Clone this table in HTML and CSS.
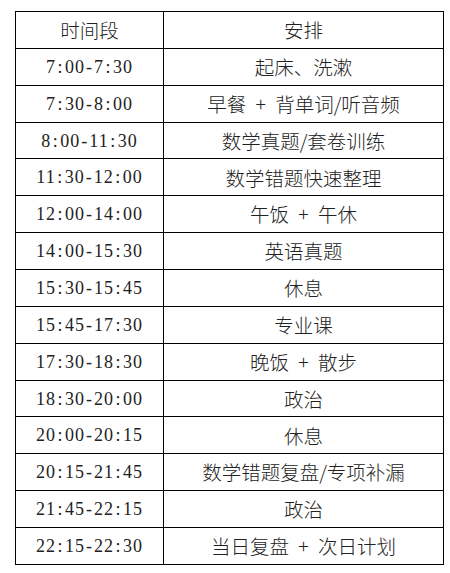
FILE: index.html
```html
<!DOCTYPE html>
<html lang="zh">
<head>
<meta charset="utf-8">
<link rel="stylesheet" href="styles.css">
</head>
<body>
<table class="schedule">
  <thead>
    <tr><th class="time-head">时间段</th><th class="plan">安排</th></tr>
  </thead>
  <tbody>
    <tr><td class="time">7<span class="sep">:</span>00<span class="sep">-</span>7<span class="sep">:</span>30</td><td class="plan">起床、洗漱</td></tr>
    <tr><td class="time">7<span class="sep">:</span>30<span class="sep">-</span>8<span class="sep">:</span>00</td><td class="plan">早餐 + 背单词/听音频</td></tr>
    <tr><td class="time">8<span class="sep">:</span>00<span class="sep">-</span>11<span class="sep">:</span>30</td><td class="plan">数学真题/套卷训练</td></tr>
    <tr><td class="time">11<span class="sep">:</span>30<span class="sep">-</span>12<span class="sep">:</span>00</td><td class="plan">数学错题快速整理</td></tr>
    <tr><td class="time">12<span class="sep">:</span>00<span class="sep">-</span>14<span class="sep">:</span>00</td><td class="plan">午饭 + 午休</td></tr>
    <tr><td class="time">14<span class="sep">:</span>00<span class="sep">-</span>15<span class="sep">:</span>30</td><td class="plan">英语真题</td></tr>
    <tr><td class="time">15<span class="sep">:</span>30<span class="sep">-</span>15<span class="sep">:</span>45</td><td class="plan">休息</td></tr>
    <tr><td class="time">15<span class="sep">:</span>45<span class="sep">-</span>17<span class="sep">:</span>30</td><td class="plan">专业课</td></tr>
    <tr><td class="time">17<span class="sep">:</span>30<span class="sep">-</span>18<span class="sep">:</span>30</td><td class="plan">晚饭 + 散步</td></tr>
    <tr><td class="time">18<span class="sep">:</span>30<span class="sep">-</span>20<span class="sep">:</span>00</td><td class="plan">政治</td></tr>
    <tr><td class="time">20<span class="sep">:</span>00<span class="sep">-</span>20<span class="sep">:</span>15</td><td class="plan">休息</td></tr>
    <tr><td class="time">20<span class="sep">:</span>15<span class="sep">-</span>21<span class="sep">:</span>45</td><td class="plan">数学错题复盘/专项补漏</td></tr>
    <tr><td class="time">21<span class="sep">:</span>45<span class="sep">-</span>22<span class="sep">:</span>15</td><td class="plan">政治</td></tr>
    <tr><td class="time">22<span class="sep">:</span>15<span class="sep">-</span>22<span class="sep">:</span>30</td><td class="plan">当日复盘 + 次日计划</td></tr>
  </tbody>
</table>
</body>
</html>
```
FILE: styles.css
```css
html, body {
  margin: 0;
  padding: 0;
  background: #fff;
}
body {
  padding: 11px 0 0 15px;
}
.schedule {
  border-collapse: collapse;
  table-layout: fixed;
  width: 429px;
  color: #222;
}
.schedule th,
.schedule td {
  border: 1px solid #000;
  padding: 0;
  height: 35.87px;
  text-align: center;
  vertical-align: middle;
  font-weight: 300;
  white-space: nowrap;
}
.schedule th:first-child,
.schedule td:first-child {
  width: 147px;
}
.time-head,
.plan {
  font-family: "Noto Sans CJK SC", sans-serif;
  font-size: 19.5px;
  line-height: 1;
  word-spacing: 5px;
}
.schedule .time {
  font-family: "Liberation Serif", serif;
  font-size: 18px;
  line-height: 1;
  font-weight: 400;
  letter-spacing: 1px;
}
.sep {
  display: inline-block;
  width: 9px;
  text-align: center;
}
```
